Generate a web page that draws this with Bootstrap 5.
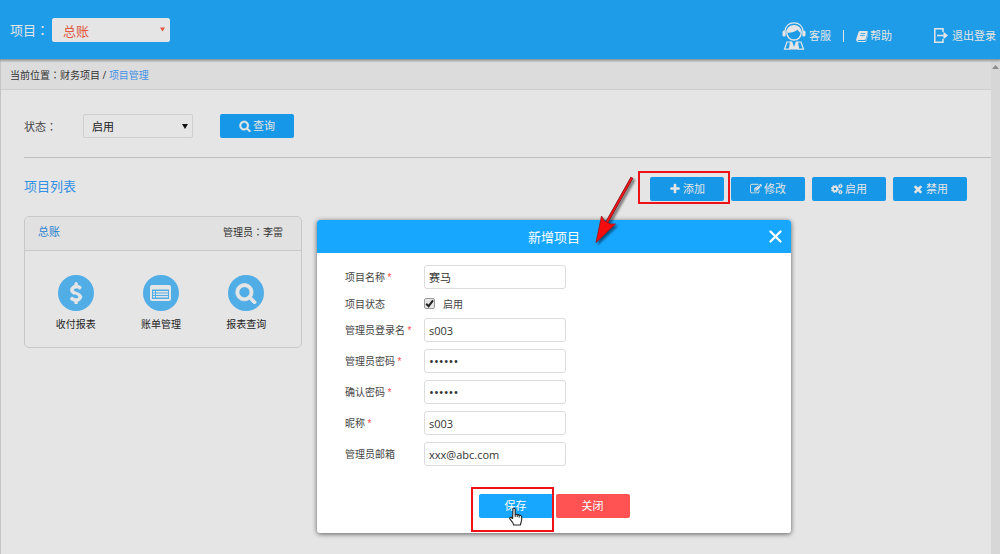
<!DOCTYPE html>
<html lang="zh-CN">
<head>
<meta charset="utf-8">
<meta name="viewport" content="width=device-width, initial-scale=1">
<title>项目管理</title>
<link href="https://cdn.jsdelivr.net/npm/bootstrap@5.3.0/dist/css/bootstrap.min.css" rel="stylesheet">
<style>
  body { font-family: "Open Sans", "Noto Sans CJK SC", sans-serif; font-size: 10px; line-height: 16px; color: #444; background: #e5e5e5; }
  .full-colon { font-family: "Noto Sans CJK TC", sans-serif; }
  a { text-decoration: none; }
  .ico { width: 12px; height: 12px; fill: currentColor; flex: none; }
  .ico-lg { width: 22px; height: 22px; stroke: currentColor; stroke-width: 70px; }

  .topbar { height: 60px; background: #1f9ce8; color: #e5e5e5; border-bottom: 1px solid #8d9aa3; box-shadow: 0 1px 2px rgba(0,0,0,.3); z-index: 1; padding-left: 10px; padding-right: 4px; font-size: 11px; }
  .topbar a { color: #e5e5e5; }
  .project-label { font-size: 13px; width: 42px; white-space: nowrap; }
  .pick { appearance: none; height: 24px; font-size: 11px; line-height: 16px; padding: 2px 16px 0 8px; border: 1px solid #cfcfcf; border-radius: 2px; color: #222; background: #e5e5e5 url("data:image/svg+xml,%3Csvg xmlns='http://www.w3.org/2000/svg' viewBox='0 0 6 5'%3E%3Cpath d='M0 0h6L3 5z' fill='%23111'/%3E%3C/svg%3E") no-repeat right 4px center / 6px 5px; }
  .pick-status { width: 110px; }
  .pick-project { width: 118px; font-size: 13px; color: #e2553f; padding-left: 10px; border-color: #e5e5e5; background-image: url("data:image/svg+xml,%3Csvg xmlns='http://www.w3.org/2000/svg' viewBox='0 0 6 5'%3E%3Cpath d='M0 0h6L3 5z' fill='%23e2553f'/%3E%3C/svg%3E"); background-size: 5px 5px; }
  .top-links { padding-top: 12px; }
  .agent { width: 24px; height: 28px; margin-right: 3px; }
  .help { gap: 2px; }
  .divider { width: 1px; height: 12px; background: #e5e5e5; margin: 0 12px; }
  .logout { margin-left: 42px; }

  .crumbs { height: 30px; padding-left: 9px; background: #dcdcdc; border-bottom: 1px solid #cecece; color: #333; }
  .crumbs a { color: #3f93e6; }
  .workspace { border-left: 1px solid #c4c4c4; }
  .track { width: 9px; background: #d7d7d7; padding-top: 5px; }
  .filter { margin-left: 23px; padding: 24px 0 19px; border-bottom: 1px solid #bdbdbd; font-size: 11px; }
  .filter label { width: 59px; }
  .filter .btn { margin-left: 27px; }
  .act { width: 74px; height: 24px; padding: 0; border: 0; border-radius: 2px; font-size: 11px; line-height: 16px; color: #e5e5e5; background: #1797e7; display: inline-flex; align-items: center; justify-content: center; gap: 2px; }
  .act:hover { color: #e5e5e5; background: #1797e7; }
  .act-save, .act-save:hover { background: #18a7ff; color: #fff; }
  .act-close, .act-close:hover { background: #ff5252; color: #fff; }
  .toolbar { padding: 19px 24px 15px 23px; }
  .toolbar-actions { gap: 7px; }
  .toolbar h1 { font-size: 13px; line-height: 18px; font-weight: 400; color: #2f8fe2; margin: 0; }

  .ledger { width: 278px; margin-left: 23px; border: 1px solid #c8c8c8; border-radius: 5px; background: transparent; }
  .ledger-head { height: 34px; background: #e1e1e1; border-bottom: 1px solid #c8c8c8; border-radius: 5px 5px 0 0; padding: 0 18px 4px 13px; color: #333; }
  .ledger-head h2 { font-size: 11px; line-height: 16px; margin: 0; font-weight: 400; color: #2b82d0; }
  .ledger-body { padding: 24px 12px 15px 8px; }
  .tile { color: #222; gap: 5px; }
  .disc { width: 36px; height: 36px; background: #50ade6; color: #e5e5e5; }

  .marked { position: relative; display: inline-flex; }
  .marked::after { content: ""; position: absolute; border: 2px solid #ec1217; pointer-events: none; }
  .marked-add::after { inset: -6px -6px -3px -12px; }
  .marked-save::after { inset: -7px -1px -14px -8px; }
  .pointer-arrow { position: absolute; left: 59%; top: 170px; width: 50px; height: 80px; z-index: 5; pointer-events: none; }
  .hand { position: absolute; left: 30px; top: 13px; width: 14px; height: 20px; z-index: 2; }

  .dialog { position: absolute; left: 31.7%; top: 220px; width: 47.4%; background: #fff; border-radius: 3px; box-shadow: 0 1px 5px rgba(0,0,0,.6); z-index: 3; }
  .dialog-head { height: 33px; background: #18a7ff; color: #fff; border-radius: 3px 3px 0 0; position: relative; }
  .dialog-head h2 { font-size: 13px; line-height: 20px; font-weight: 400; margin: 0; }
  .dialog-x { position: absolute; right: 9px; top: 10px; width: 13px; height: 13px; padding: 0; border: 0; background: none; color: #fff; display: flex; }
  .dialog-form { padding: 12px 28px 15px; }
  .form-lines { gap: 7px; }
  .form-line > label { width: 79px; }
  .req { color: #ff4b4b; font-family: "Liberation Sans", sans-serif; }
  .field { width: 142px; height: 24px; min-height: 0; padding: 0 4px; border: 1px solid #dcdcdc; border-radius: 3px; font-size: 11px; line-height: 16px; color: #333; }
  .field[type=password] { font-size: 13px; }
  .check-line { height: 15px; }
  .tick { appearance: none; width: 11px; height: 11px; margin: 0 8px 0 0; border: 1px solid #999; border-radius: 2px; background: #e6e6e6; }
  .tick:checked { background: #e6e6e6 url("data:image/svg+xml,%3Csvg xmlns='http://www.w3.org/2000/svg' viewBox='0 0 9 9'%3E%3Cpath d='M1.2 4.8 3.6 7.2 8 1.4' fill='none' stroke='%23222' stroke-width='2'/%3E%3C/svg%3E") center / 9px 9px no-repeat; }
  .dialog-actions { gap: 3px; margin-top: 28px; }
</style>
</head>
<body>
<svg class="d-none" xmlns="http://www.w3.org/2000/svg">
  <symbol id="i-search" viewBox="0 0 1792 1792"><path d="M1216 832q0-185-131.500-316.500T768 384 451.500 515.500 320 832t131.500 316.500T768 1280t316.500-131.500T1216 832zm512 832q0 52-38 90t-90 38q-54 0-90-38l-343-342q-179 124-399 124-143 0-273.500-55.500t-225-150-150-225T64 832t55.500-273.500 150-225 225-150T768 128t273.500 55.500 225 150 150 225T1472 832q0 220-124 399l343 343q37 37 37 90z" stroke="currentColor" stroke-width="60"/></symbol>
  <symbol id="i-plus" viewBox="0 0 1792 1792"><path d="M1600 736v192q0 40-28 68t-68 28h-416v416q0 40-28 68t-68 28H800q-40 0-68-28t-28-68v-416H288q-40 0-68-28t-28-68V736q0-40 28-68t68-28h416V224q0-40 28-68t68-28h192q40 0 68 28t28 68v416h416q40 0 68 28t28 68z"/></symbol>
  <symbol id="i-times" viewBox="0 0 1792 1792"><path d="M1490 1322q0 40-28 68l-136 136q-28 28-68 28t-68-28l-294-294-294 294q-28 28-68 28t-68-28l-136-136q-28-28-28-68t28-68l294-294-294-294q-28-28-28-68t28-68l136-136q28-28 68-28t68 28l294 294 294-294q28-28 68-28t68 28l136 136q28 28 28 68t-28 68l-294 294 294 294q28 28 28 68z"/></symbol>
  <symbol id="i-edit" viewBox="0 0 1792 1792"><path d="M888 1184l116-116-152-152-116 116v56h96v96h56zm440-720q-16-16-33 1L945 815q-17 17-1 33t33-1l350-350q17-17 1-33zm80 594v190q0 119-84.500 203.500T1120 1536H288q-119 0-203.500-84.500T0 1248V416q0-119 84.500-203.500T288 128h832q63 0 117 25 15 7 18 23 3 17-9 29l-49 49q-14 14-32 8-23-6-45-6H288q-66 0-113 47t-47 113v832q0 66 47 113t113 47h832q66 0 113-47t47-113v-126q0-13 9-22l64-64q15-15 35-7t20 29zm-96-738l288 288-672 672H640V768zm444 132l-92 92-288-288 92-92q28-28 68-28t68 28l152 152q28 28 28 68t-28 68z"/></symbol>
  <symbol id="i-usd" viewBox="0 0 1792 1792"><path d="M1362 1185q0 153-99.500 263.500T1004 1585v175q0 14-9 23t-23 9H837q-13 0-22.500-9.500T805 1760v-175q-66-9-127.500-31T576 1509.500t-74-48-46.500-37.500-17.500-18q-17-21-2-41l103-135q7-10 23-12 15-2 24 9l2 2q113 99 243 125 37 8 74 8 81 0 142.500-43t61.500-122q0-28-15-53t-33.500-42-58.500-37.500-66-32-80-32.500q-39-16-61.500-25T734 1001.500t-62.500-31T615 935t-53.500-42.500-43.500-49-35.500-58-21-66.500T453 641q0-138 98-242t255-134V85q0-13 9.500-22.500T838 53h135q14 0 23 9t9 23v176q57 6 110.500 23t87 33.500T1266 355t39 29 15 14q17 18 5 38l-81 146q-8 15-23 16-14 3-27-7-3-3-14.500-12t-39-26.500-58.500-32-74.500-26T919 483q-95 0-155 43t-60 111q0 26 8.500 48t29.500 41.500 39.500 33 56 31 60.500 27 70 27.500q53 20 81 31.500t76 35 75.500 42.500 62 50 53 63.500 31.500 76.500 13 94z"/></symbol>
  <symbol id="i-cogs" viewBox="0 0 26 24"><g fill="none" stroke="currentColor"><circle cx="8.500" cy="12" r="4.800" stroke-width="4"/><circle cx="8.500" cy="12" r="7.400" stroke-width="2.400" stroke-dasharray="3.200 2.610"/><circle cx="20.500" cy="5.500" r="2.700" stroke-width="2.600"/><circle cx="20.500" cy="5.500" r="4.300" stroke-width="1.500" stroke-dasharray="2 1.377"/><circle cx="20.500" cy="18.500" r="2.700" stroke-width="2.600"/><circle cx="20.500" cy="18.500" r="4.300" stroke-width="1.500" stroke-dasharray="2 1.377"/></g></symbol>
  <symbol id="i-book" viewBox="0 0 24 24"><path d="M8 2h14q2 .4 1.500 2.500L19.500 18q-.6 2-2.500 2H4.500q-1.700.2-1.500 1 .3.800 1.800.8H18q1.800-.2 2.300-2L24 7q.8 1 .3 2.500l-3.600 12Q20 24 17.500 24H4Q.5 23.800.3 20q0-1 .6-3L5 4.500Q5.800 2 8 2zm1.500 4-.5 1.600h9.500L19 6zm-1.200 4-.5 1.600h9.500l.5-1.600z" fill-rule="evenodd"/></symbol>
</svg>

<div class="d-flex flex-column min-vh-100 position-relative">
  <header class="topbar d-flex justify-content-between align-items-center position-relative">
    <div class="d-flex align-items-center">
      <label class="project-label" for="project">项目<span class="full-colon" lang="zh-Hant">：</span></label>
      <select id="project" class="pick pick-project"><option>总账</option></select>
    </div>
    <nav class="top-links d-flex align-items-center">
      <a href="#" class="d-flex align-items-center">
        <svg class="agent" viewBox="0 0 24 28" fill="none" stroke="#e5e5e5">
          <path d="M3 9.500C3 4 7 .8 12 .8S21 4 21 9.500" stroke-width="1.200"/>
          <rect x=".5" y="8.500" width="3.200" height="6" rx="1.500" fill="#e5e5e5" stroke="none"/>
          <rect x="20.300" y="8.500" width="3.200" height="6" rx="1.500" fill="#e5e5e5" stroke="none"/>
          <circle cx="12" cy="10.800" r="7.200" stroke-width="1.400"/>
          <path d="M5.500 10.800C5.500 6 8 4 12 4s6.500 2.500 6.500 6.800C17 10 16 8.800 15.500 7.800 13 10 9 11 5.500 10.800z" fill="#e5e5e5" stroke="none"/>
          <path d="M5 20 2.500 27.200h5L8.500 20zM19 20l2.500 7.200h-5L15.500 20z" stroke-width="1.200"/>
          <path d="M8.500 19.500h7l1 8h-9z" fill="#e5e5e5" stroke="none"/>
          <path d="M10 19 12 25l2-6z" fill="#1f9ce8" stroke="none"/>
        </svg>客服</a>
      <span class="divider"></span>
      <a href="#" class="help d-flex align-items-center"><svg class="ico"><use href="#i-book"/></svg>帮助</a>
      <a href="#" class="logout d-flex align-items-center gap-1">
        <svg width="14" height="15" viewBox="0 0 14 15" fill="none" stroke="#e5e5e5" stroke-width="1.500"><path d="M9 4V.8H.8v13.400H9V11M3 7.500h8.500"/><path d="M9.500 3.700 14 7.500 9.500 11.300z" fill="#e5e5e5" stroke="none"/></svg>退出登录</a>
    </nav>
  </header>

  <div class="d-flex flex-fill">
    <main class="workspace flex-fill">
      <nav class="crumbs d-flex align-items-center"><div>当前位置<span class="full-colon" lang="zh-Hant">：</span>财务项目 / <a href="#">项目管理</a></div></nav>

      <form class="filter d-flex align-items-center">
        <label for="status">状态<span class="full-colon" lang="zh-Hant">：</span></label>
        <select id="status" class="pick pick-status"><option>启用</option></select>
        <button type="button" class="btn act"><svg class="ico"><use href="#i-search"/></svg>查询</button>
      </form>

      <div class="toolbar d-flex justify-content-between align-items-start">
        <h1>项目列表</h1>
        <div class="toolbar-actions d-flex">
          <span class="marked marked-add"><button type="button" class="btn act"><svg class="ico"><use href="#i-plus"/></svg>添加</button></span>
          <button type="button" class="btn act"><svg class="ico"><use href="#i-edit"/></svg>修改</button>
          <button type="button" class="btn act"><svg class="ico"><use href="#i-cogs"/></svg>启用</button>
          <button type="button" class="btn act"><svg class="ico"><use href="#i-times"/></svg>禁用</button>
        </div>
      </div>

      <section class="card ledger">
        <div class="ledger-head d-flex justify-content-between align-items-center">
          <h2>总账</h2><span>管理员<span class="full-colon" lang="zh-Hant">：</span>李雷</span>
        </div>
        <div class="ledger-body row g-0">
          <a href="#" class="tile col-4 d-flex flex-column align-items-center"><span class="disc rounded-circle d-flex align-items-center justify-content-center"><svg class="ico ico-lg"><use href="#i-usd"/></svg></span>收付报表</a>
          <a href="#" class="tile col-4 d-flex flex-column align-items-center"><span class="disc rounded-circle d-flex align-items-center justify-content-center"><svg width="21" height="16" viewBox="0 0 21 16"><path fill="currentColor" fill-rule="evenodd" d="M2 0h17q2 0 2 2v12q0 2-2 2H2q-2 0-2-2V2q0-2 2-2zM2 4.500V14h17V4.500zM3 6h2v1.500H3zm3 0h12v1.500H6zM3 8.500h2V10H3zm3 0h12V10H6zM3 11h2v1.500H3zm3 0h12v1.500H6z"/></svg></span>账单管理</a>
          <a href="#" class="tile col-4 d-flex flex-column align-items-center"><span class="disc rounded-circle d-flex align-items-center justify-content-center"><svg class="ico ico-lg"><use href="#i-search"/></svg></span>报表查询</a>
        </div>
      </section>
    </main>
    <div class="track d-flex justify-content-center"><svg width="7" height="4" viewBox="0 0 7 4"><path d="M0 4 3.500 0 7 4z" fill="#8c8c8c"/></svg></div>
  </div>

  <section class="dialog" role="dialog" aria-labelledby="dlg-title">
    <div class="dialog-head d-flex align-items-center justify-content-center">
      <h2 id="dlg-title">新增项目</h2>
      <button type="button" class="dialog-x" aria-label="关闭"><svg width="13" height="13" viewBox="0 0 13 13"><path d="M1.500 1.500 11.500 11.500M11.500 1.500 1.500 11.500" stroke="currentColor" stroke-width="2.300" stroke-linecap="round"/></svg></button>
    </div>
    <form class="dialog-form">
      <div class="form-lines d-flex flex-column">
        <div class="form-line d-flex align-items-center"><label for="f-name">项目名称 <span class="req">*</span></label><input id="f-name" class="field form-control" type="text" value="赛马"></div>
        <div class="form-line check-line d-flex align-items-center"><label for="f-on">项目状态</label><input id="f-on" class="tick" type="checkbox" checked><label for="f-on" class="w-auto">启用</label></div>
        <div class="form-line d-flex align-items-center"><label for="f-login">管理员登录名 <span class="req">*</span></label><input id="f-login" class="field form-control" type="text" value="s003"></div>
        <div class="form-line d-flex align-items-center"><label for="f-pw">管理员密码 <span class="req">*</span></label><input id="f-pw" class="field form-control" type="password" value="123456"></div>
        <div class="form-line d-flex align-items-center"><label for="f-pw2">确认密码 <span class="req">*</span></label><input id="f-pw2" class="field form-control" type="password" value="123456"></div>
        <div class="form-line d-flex align-items-center"><label for="f-nick">昵称 <span class="req">*</span></label><input id="f-nick" class="field form-control" type="text" value="s003"></div>
        <div class="form-line d-flex align-items-center"><label for="f-mail">管理员邮箱</label><input id="f-mail" class="field form-control" type="text" value="xxx@abc.com"></div>
      </div>
      <div class="dialog-actions d-flex justify-content-center">
        <span class="marked marked-save"><button type="button" class="btn act act-save">保存</button>
          <svg class="hand" viewBox="0 0 14 20"><path d="M4 1.600q1.400-1 2.200.6V7.500q1.300-.7 2 .3 1.400-.5 2 .6 1.700-.4 2.300 1 .6 2-.2 5.100L11.300 18H4.800Q4 15.500 1 12.200.2 10.300 2 10.200L3.600 11.500z" fill="#fff" stroke="#222" stroke-width="1.100" stroke-linejoin="round"/><path d="M6.200 7.500V10M8.200 8v2.200M10.200 8.600v2" stroke="#222"/></svg></span>
        <button type="button" class="btn act act-close">关闭</button>
      </div>
    </form>
  </section>

  <svg class="pointer-arrow" viewBox="0 0 50 80">
    <g style="filter:drop-shadow(2px 2px 1px rgba(0,0,0,.5))"><path d="M42 7.500 17 52" stroke="#6b0d10" stroke-width="3"/><path d="M42 7.500 17 52" stroke="#f5141a" stroke-width="1.800"/><path d="M6 72.500 11.500 46 14.500 51 20.500 54 25.500 54z" fill="#f50d0d" stroke="#a01014" stroke-width=".8"/></g>
  </svg>
</div>
<script src="https://cdn.jsdelivr.net/npm/bootstrap@5.3.0/dist/js/bootstrap.bundle.min.js"></script>
</body>
</html>
